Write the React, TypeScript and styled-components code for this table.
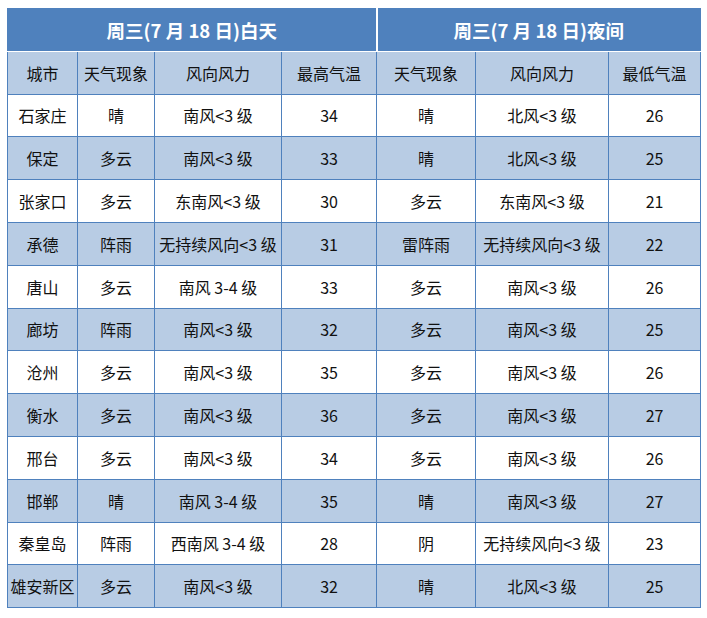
import React from 'react';
import styled, { createGlobalStyle } from 'styled-components';

const GlobalStyle = createGlobalStyle`
  body {
    margin: 0;
    background: #ffffff;
    font-family: "Noto Sans CJK SC", "Noto Sans", sans-serif;
  }
`;

const Page = styled.div`
  padding: 8px 0 0 7px;
`;

const Table = styled.table`
  border-collapse: collapse;
  table-layout: fixed;
  width: 694px;
  border: 1px solid #4f81bd;
`;

const HeadCell = styled.th`
  height: 41.8px;
  padding: 0;
  background: #4f81bd;
  color: #ffffff;
  font-size: 18.5px;
  font-weight: bold;
  border: 1px solid #4f81bd;
  border-bottom-color: #ffffff;

  & + & {
    border-left: 2px solid #ffffff;
  }
`;

const SubCell = styled.th`
  height: 41.8px;
  padding: 0;
  background: #b8cce4;
  color: #111111;
  font-size: 16px;
  font-weight: normal;
  border: 1px solid #4f81bd;
  border-top-color: #ffffff;
`;

const Row = styled.tr<{ shaded?: boolean }>`
  background: ${p => (p.shaded ? '#b8cce4' : '#ffffff')};
`;

const Cell = styled.td`
  height: 41.8px;
  padding: 0;
  text-align: center;
  color: #111111;
  font-size: 16px;
  white-space: nowrap;
  border: 1px solid #4f81bd;
`;

const widths = [70, 77, 127, 95, 99, 133, 92];

const subHeads = ['城市', '天气现象', '风向风力', '最高气温', '天气现象', '风向风力', '最低气温'];

const rows: string[][] = [
  ['石家庄', '晴', '南风<3 级', '34', '晴', '北风<3 级', '26'],
  ['保定', '多云', '南风<3 级', '33', '晴', '北风<3 级', '25'],
  ['张家口', '多云', '东南风<3 级', '30', '多云', '东南风<3 级', '21'],
  ['承德', '阵雨', '无持续风向<3 级', '31', '雷阵雨', '无持续风向<3 级', '22'],
  ['唐山', '多云', '南风 3-4 级', '33', '多云', '南风<3 级', '26'],
  ['廊坊', '阵雨', '南风<3 级', '32', '多云', '南风<3 级', '25'],
  ['沧州', '多云', '南风<3 级', '35', '多云', '南风<3 级', '26'],
  ['衡水', '多云', '南风<3 级', '36', '多云', '南风<3 级', '27'],
  ['邢台', '多云', '南风<3 级', '34', '多云', '南风<3 级', '26'],
  ['邯郸', '晴', '南风 3-4 级', '35', '晴', '南风<3 级', '27'],
  ['秦皇岛', '阵雨', '西南风 3-4 级', '28', '阴', '无持续风向<3 级', '23'],
  ['雄安新区', '多云', '南风<3 级', '32', '晴', '北风<3 级', '25'],
];

export default function App() {
  return (
    <Page>
      <GlobalStyle />
      <Table>
        <colgroup>
          {widths.map((w, i) => (
            <col key={i} style={{ width: w }} />
          ))}
        </colgroup>
        <thead>
          <tr>
            <HeadCell colSpan={4}>周三(7 月 18 日)白天</HeadCell>
            <HeadCell colSpan={3}>周三(7 月 18 日)夜间</HeadCell>
          </tr>
          <tr>
            {subHeads.map((h, i) => (
              <SubCell key={i}>{h}</SubCell>
            ))}
          </tr>
        </thead>
        <tbody>
          {rows.map((r, i) => (
            <Row key={i} shaded={i % 2 === 1}>
              {r.map((c, j) => (
                <Cell key={j}>{c}</Cell>
              ))}
            </Row>
          ))}
        </tbody>
      </Table>
    </Page>
  );
}
